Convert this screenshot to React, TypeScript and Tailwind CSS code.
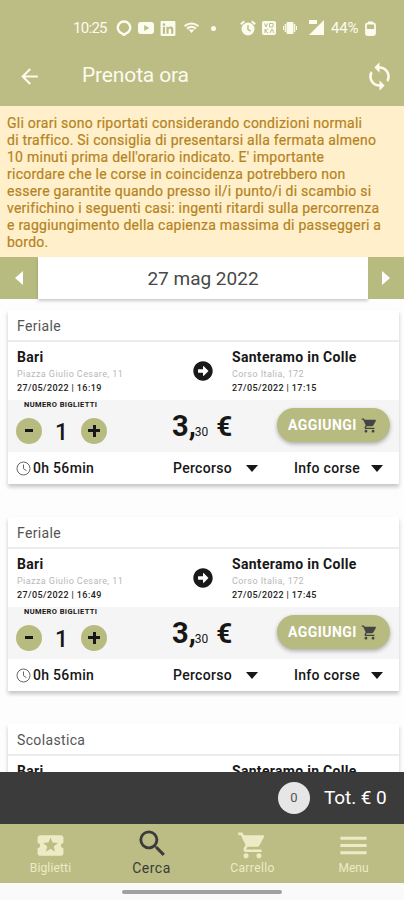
import { FaArrowAltCircleRight, FaLinkedin } from "react-icons/fa";
import { MdArrowBack, MdLocalActivity, MdMenu, MdSearch, MdShoppingCart, MdSync } from "react-icons/md";

type Trip = {
  kind: string;
  departure: string;
  arrival: string;
};

const trips: Trip[] = [
  { kind: "Feriale", departure: "16:19", arrival: "17:15" },
  { kind: "Feriale", departure: "16:49", arrival: "17:45" },
  { kind: "Scolastica", departure: "17:19", arrival: "18:15" },
];

const noticeLines = [
  "Gli orari sono riportati considerando condizioni normali",
  "di traffico. Si consiglia di presentarsi alla fermata almeno",
  "10 minuti prima dell'orario indicato. E' importante",
  "ricordare che le corse in coincidenza potrebbero non",
  "essere garantite quando presso il/i punto/i di scambio si",
  "verifichino i seguenti casi: ingenti ritardi sulla percorrenza",
  "e raggiungimento della capienza massima di passeggeri a",
  "bordo.",
];

function StatusBar() {
  return (
    <div className="flex h-14 items-center pl-[73px] text-[#fbfbee]">
      <span className="w-[43px] text-[15px] tracking-[-0.7px]">10:25</span>
      <svg className="h-4 w-4" viewBox="0 0 16 16" fill="none" stroke="currentColor" strokeWidth="2.4">
        <path d="M6.2 13.600A6.200 6.200 0 1 1 9.800 13.600L8 15 6.200 13.600Z" />
      </svg>
      <svg className="ml-1.5 h-4 w-4" viewBox="0 0 16 16">
        <rect y="2" width="16" height="12" rx="3" fill="currentColor" />
        <path d="M6.2 5v6l5-3z" fill="#bcbd84" />
      </svg>
      <FaLinkedin className="ml-1.5 h-[17px] w-4" />
      <svg className="ml-2 h-3 w-[15px]" viewBox="0 0 15 12" fill="none" stroke="currentColor" strokeWidth="2">
        <path d="M.5 4.2Q7.5-1 14.5 4.2M3 6.6Q7.5 3 12 6.6" />
        <path d="M4.500 7.500h6L7.500 11z" fill="currentColor" stroke="none" />
      </svg>
      <span className="ml-3 h-[5px] w-[5px] rounded-full bg-current" />
      <svg className="ml-6 h-4 w-4" viewBox="0 0 16 16">
        <circle cx="8" cy="9" r="6.5" fill="currentColor" />
        <path d="M.8 4.2 4.3 1.2M15.2 4.2l-3.500-3" stroke="currentColor" strokeWidth="2" />
        <path d="M8 5v4.500l2.600 1.600" stroke="#bcbd84" strokeWidth="1.400" fill="none" />
      </svg>
      <svg className="ml-[6px] h-[14px] w-[14px]" viewBox="0 0 14 14">
        <rect width="14" height="14" rx="2" fill="currentColor" />
        <path
          d="M2.500 2.500 4 6l1.500-3.500M7.500 2.500h3.500v3.500H7.500zM3 8v4M3 10l3-2M3.500 10 6 12M8 12l2-4 2 4"
          stroke="#bcbd84"
          fill="none"
        />
      </svg>
      <svg className="ml-[7px] h-[14px] w-[14px]" viewBox="0 0 14 14" fill="currentColor">
        <rect x="3.500" y="1" width="7" height="12" rx="1" />
        <path d="M1.700 3h1.200v8H1.700zM11.100 3h1.200v8h-1.200zM0 5h1v4H0zM13 5h1v4h-1z" />
      </svg>
      <svg className="ml-[11px] h-4 w-4" viewBox="0 0 16 16" fill="currentColor">
        <path d="M16 0v15H1z" />
        <path d="M1 0h8v4H1z" />
      </svg>
      <span className="ml-[7px] w-[34px] text-[15px] tracking-[-0.2px]">44%</span>
      <svg className="h-[15px] w-[11px]" viewBox="0 0 11 15">
        <path d="M3 .5h5v2H3z" fill="currentColor" />
        <rect x="1" y="2.500" width="9" height="11.500" rx="1.500" fill="none" stroke="currentColor" strokeWidth="1.800" />
        <path d="M1 8h9v6H1z" fill="currentColor" />
      </svg>
    </div>
  );
}

function DownTriangle() {
  return (
    <svg className="h-[7px] w-3" viewBox="0 0 12 7" fill="currentColor">
      <path d="M0 0h12L6 7z" />
    </svg>
  );
}

function Stop({ name, address, time, className }: { name: string; address: string; time: string; className: string }) {
  return (
    <div className={`pt-[6px] ${className}`}>
      <div className="text-[14px] font-bold leading-[18px] tracking-[0.3px] text-[#171717]">{name}</div>
      <div className="text-[9px] leading-4 tracking-[0.43px] text-[#b8b8b8]">{address}</div>
      <div className="text-[9px] font-medium leading-3 tracking-[0.4px] text-[#222]">27/05/2022 | {time}</div>
    </div>
  );
}

function TripCard({ trip }: { trip: Trip }) {
  return (
    <div className="h-[174px] bg-white shadow-[0_3px_4px_rgba(0,0,0,0.22)]">
      <div className="flex h-8 items-center border-b-2 border-[#ededed] pl-[9px] pt-0.5 text-[14px] tracking-[0.35px] text-[#555]">
        {trip.kind}
      </div>

      {/* Stops */}
      <div className="flex h-[58px] pl-[9px]">
        <Stop name="Bari" address="Piazza Giulio Cesare, 11" time={trip.departure} className="w-[176px]" />
        <FaArrowAltCircleRight className="mt-[19px] h-5 w-5 text-[#191919]" />
        <Stop name="Santeramo in Colle" address="Corso Italia, 172" time={trip.arrival} className="ml-[19px]" />
      </div>

      {/* Ticket count and price */}
      <div className="flex h-[52px] bg-[#f5f5f5] text-[#171717]">
        <div className="w-[164px] pl-[8px]">
          <div className="pl-2 text-[7.5px] font-bold leading-[10px] tracking-[0.4px]">NUMERO BIGLIETTI</div>
          <div className="mt-[7px] flex items-center">
            <span className="flex h-[26px] w-[26px] items-center justify-center rounded-full bg-[#b8bb80]">
              <span className="h-[3px] w-2 bg-current" />
            </span>
            <span className="w-[39px] pt-1 text-center text-[23px] font-medium leading-none">1</span>
            <span className="relative flex h-[26px] w-[26px] items-center justify-center rounded-full bg-[#b8bb80]">
              <span className="h-[3px] w-3 bg-current" />
              <span className="absolute h-3 w-[3px] bg-current" />
            </span>
          </div>
        </div>
        <div className="flex w-[105px] items-baseline pt-2 font-bold leading-9">
          <span className="text-[29px]">3,</span>
          <span className="-ml-px text-[12px] font-normal">30</span>
          <span className="ml-2 text-[28px]">€</span>
        </div>
        <button className="mt-2 flex h-[34px] w-[113px] items-center rounded-full bg-[#b8bb80] pl-[11px] text-[14px] font-bold tracking-[0.45px] text-white shadow-[0_2px_4px_rgba(0,0,0,0.3)]">
          AGGIUNGI
          <MdShoppingCart className="ml-1 h-[17px] w-[17px] text-[#444]" />
        </button>
      </div>

      <div className="flex h-8 items-center pl-2 text-[14px] font-medium tracking-[0.3px] text-[#171717]">
        <svg className="h-[15px] w-[15px] text-[#666]" viewBox="0 0 15 15" fill="none" stroke="currentColor">
          <circle cx="7.500" cy="7.500" r="6.500" />
          <path d="M7.500 3.500v4.200l3 2" />
        </svg>
        <span className="ml-0.5 w-[140px]">0h 56min</span>
        <span className="w-[73px]">Percorso</span>
        <DownTriangle />
        <span className="ml-9 w-[77px]">Info corse</span>
        <DownTriangle />
      </div>
    </div>
  );
}

export default function App() {
  return (
    <div className="flex h-[900px] w-[404px] flex-col overflow-hidden bg-[#fdfdfd] font-[Roboto,sans-serif]">
      <header className="h-[106px] shrink-0 bg-[#bcbd84] text-[#fbfbee]">
        <StatusBar />
        <div className="flex h-10 items-center pl-[17px]">
          <MdArrowBack className="h-[25px] w-[25px]" />
          <h1 className="ml-[40px] w-[282px] text-[21px] tracking-[-0.15px]">Prenota ora</h1>
          <MdSync className="h-[31px] w-[31px]" />
        </div>
      </header>

      <div className="h-[151px] shrink-0 bg-[#fff0cb] pl-[7px] pt-[9px] text-[14px] leading-[17px] text-[#b5831d]">
        {noticeLines.map((line) => (
          <div key={line} className="whitespace-nowrap tracking-[0.25px] [-webkit-text-stroke:0.2px]">
            {line}
          </div>
        ))}
      </div>

      {/* Day picker */}
      <div className="flex h-[42px] shrink-0 text-white">
        <div className="flex w-[38px] items-center justify-center bg-[#b8bb80]">
          <svg className="h-[14px] w-2" viewBox="0 0 8 14" fill="currentColor">
            <path d="M8 0v14L0 7z" />
          </svg>
        </div>
        <div className="flex flex-1 items-center justify-center bg-white pt-0.5 text-[19px] text-[#484848] shadow-[0_2px_3px_rgba(0,0,0,0.2)]">
          27 mag 2022
        </div>
        <div className="flex w-9 items-center justify-center bg-[#b8bb80]">
          <svg className="h-[14px] w-2" viewBox="0 0 8 14" fill="currentColor">
            <path d="M0 0v14l8-7z" />
          </svg>
        </div>
      </div>

      <main className="flex min-h-0 flex-1 flex-col gap-[33px] overflow-hidden pl-2 pr-[5px] pt-[11px]">
        {trips.map((trip, i) => (
          <div key={i} className="shrink-0">
            <TripCard trip={trip} />
          </div>
        ))}
      </main>

      {/* Cart total */}
      <div className="flex h-[52px] shrink-0 items-center bg-[#3b3b3b] pl-[278px] text-white">
        <span className="flex h-8 w-8 items-center justify-center rounded-full bg-[#e6e6e6] text-[13px] text-[#555]">0</span>
        <span className="ml-[14px] text-[19px] tracking-[-0.1px]">Tot. € 0</span>
      </div>

      <nav className="grid h-[59px] shrink-0 grid-cols-4 bg-[#bcbd84] text-[12px] leading-[18px] text-[#ecebc6]">
        <div className="flex flex-col items-center pt-1.5">
          <MdLocalActivity className="h-[31px] w-[31px]" />
          <span className="-mt-0.5 tracking-[0.15px]">Biglietti</span>
        </div>
        <div className="flex flex-col items-center pt-0.5 text-[#3b3b3b]">
          <MdSearch className="ml-0.5 h-[35px] w-[35px]" />
          <span className="-mt-0.5 text-[14px] tracking-[0.5px]">Cerca</span>
        </div>
        <div className="flex flex-col items-center pt-1.5">
          <MdShoppingCart className="h-[31px] w-[31px]" />
          <span className="-mt-0.5 tracking-[0.4px]">Carrello</span>
        </div>
        <div className="flex flex-col items-center pt-1">
          <MdMenu className="h-[35px] w-[35px]" />
          <span className="-mt-1">Menu</span>
        </div>
      </nav>

      <div className="flex h-[17px] shrink-0 justify-center bg-[#fafafa] pt-[7px]">
        <div className="h-1 w-40 rounded-full bg-[#a0a0a0]" />
      </div>
    </div>
  );
}
